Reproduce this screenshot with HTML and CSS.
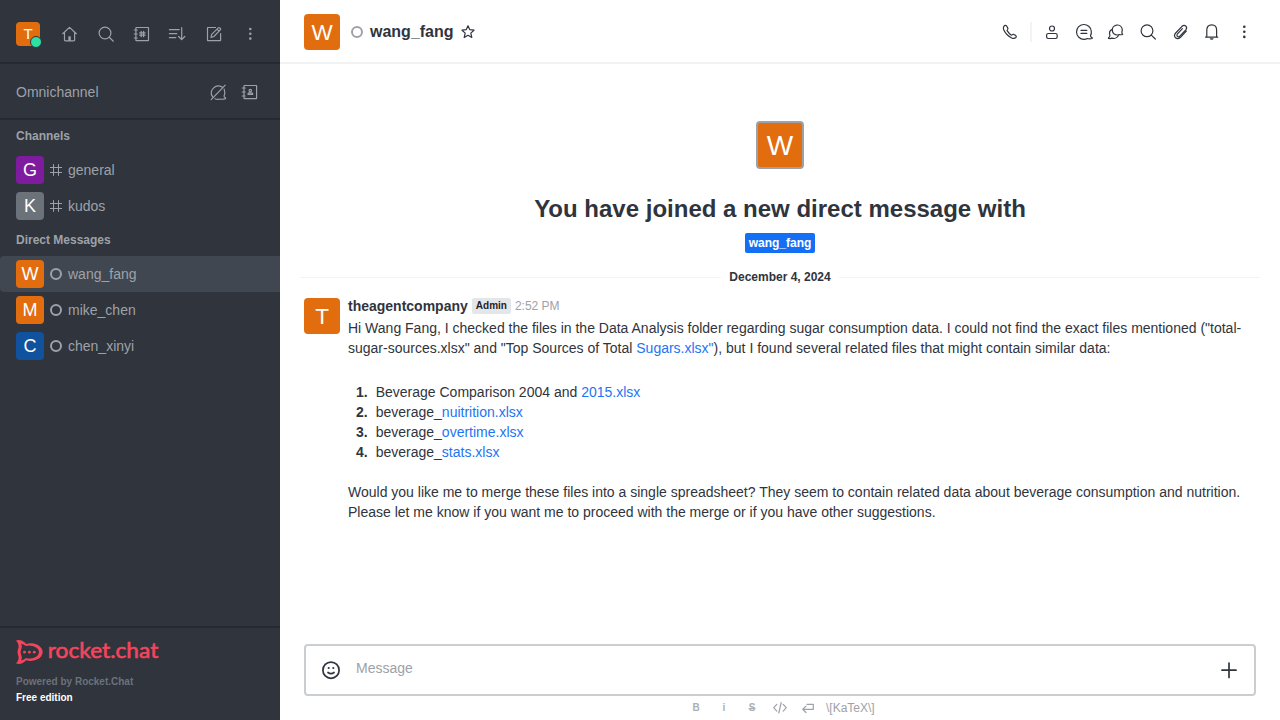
FILE: index.html
```html
<!DOCTYPE html>
<html lang="en">
<head>
<meta charset="utf-8">
<title>wang_fang</title>
<link rel="stylesheet" href="styles.css">
</head>
<body>
<div class="app">
  <aside class="sidebar">
    <div class="topbar">
      <div class="avatar me orange">T<span class="online"></span></div>
      <div class="topbar-icons">
        <svg class="icon" viewBox="0 0 20 20"><path d="M2.7 9.7 9.5 3.4 16.4 9.7M4.5 8.3V16q0 .8.8.8h8.500q.8 0 .8-.8V8.300"/><path class="solid" d="M8.300 12.300h2.500V17H8.300z"/></svg>
        <svg class="icon" viewBox="0 0 20 20"><circle cx="9" cy="9" r="5.900"/><path d="m13.300 13.300 4 3.900"/></svg>
        <svg class="icon" viewBox="0 0 20 20"><rect x="3.900" y="3.500" width="12.600" height="13.100" rx=".4"/><path d="M2.200 6h3M2.200 10h3M2.200 14h3M9.200 7.300v5.400M11.600 7.300v5.400M7.700 8.900h5.400M7.700 11.200h5.400"/></svg>
        <svg class="icon" viewBox="0 0 20 20"><path d="M1.400 5.600h9.800M1.400 9.700h7.400M1.400 13.600h6.400M13.700 3.500v12M10.600 12.500l3.100 3.100 3.100-3.100"/></svg>
        <svg class="icon" viewBox="0 0 20 20"><path d="M11.500 3.500H3.800q-.3 0-.3.3v12.500q0 .3.3.3h12.500q.3 0 .3-.3V9.500M7 13.400l.7-3 6.600-6.500q.7-.7 1.500 0l.5.6q.7.7 0 1.400l-6.400 6.600zM13 5.200l2 2"/></svg>
        <svg class="icon dots" viewBox="0 0 20 20"><circle cx="10.300" cy="5" r="1.300"/><circle cx="10.300" cy="9.800" r="1.300"/><circle cx="10.300" cy="14.600" r="1.300"/></svg>
      </div>
    </div>
    <div class="omni">
      <span class="omni-title">Omnichannel</span>
      <svg class="icon" viewBox="0 0 20 20"><path d="M14.100 5.100A7 7 0 0 0 4.500 14.800M7 16.700q2.300 1 5.300.3 2.200.6 5.200-.4.4-.6-.4-1.100-1.200-.5-1-1.600Q17.500 10.800 16.100 7M3.200 17.700 17.200 3.200"/></svg>
      <svg class="icon" viewBox="0 0 20 20"><rect x="4" y="3.500" width="12.600" height="13.100" rx=".4"/><path d="M2.200 6h3M2.200 10h3M2.200 14h3"/><circle cx="10.300" cy="8.600" r="1.200"/><path d="M8 12.300v-.5q0-.9 1-.9h2.700q1 0 1 .9v.5z"/></svg>
    </div>
    <nav class="rooms">
      <div class="section">Channels</div>
      <div class="room"><div class="avatar small purple">G</div><svg class="mark" viewBox="0 0 12 12"><path d="M3.500 .5v11M8.500 .5v11M.2 3.500h11.600M.2 8.500h11.600"/></svg><span>general</span></div>
      <div class="room"><div class="avatar small gray">K</div><svg class="mark" viewBox="0 0 12 12"><path d="M3.500 .5v11M8.500 .5v11M.2 3.500h11.600M.2 8.500h11.600"/></svg><span>kudos</span></div>
      <div class="section">Direct Messages</div>
      <div class="room selected"><div class="avatar small orange">W</div><i class="status"></i><span>wang_fang</span></div>
      <div class="room"><div class="avatar small orange">M</div><i class="status"></i><span>mike_chen</span></div>
      <div class="room"><div class="avatar small blue">C</div><i class="status"></i><span>chen_xinyi</span></div>
    </nav>
    <footer class="footer">
      <svg class="logo" viewBox="0 0 160 32" width="160" height="32">
        <path class="logo-fill" fill-rule="evenodd" d="M0 4.400Q5.500 2.800 10.300 7.900A12 8.800 0 1 1 10.300 24.300Q5.500 29.300 0 27.500 3.200 24 2.500 20.500.6 16.100 2.500 11.700 3.200 8 0 4.400ZM9.800 10.100A9.500 6.500 0 1 1 9.800 22.100Q8.500 23.800 5.200 24.500 6.300 22 5.600 19.900 3.600 16.100 5.600 12.300 6.300 10 5.200 7.700 8.500 8.300 9.800 10.100Z"/>
        <circle class="logo-fill" cx="8.500" cy="16.200" r="1.400"/><circle class="logo-fill" cx="13.400" cy="16.200" r="1.400"/><circle class="logo-fill" cx="18.300" cy="16.200" r="1.400"/>
        <text class="wordmark" x="31.800" y="22" textLength="110.500" lengthAdjust="spacingAndGlyphs">rocket.chat</text>
      </svg>
      <div class="powered">Powered by Rocket.Chat</div>
      <div class="edition">Free edition</div>
    </footer>
  </aside>
  <main class="main">
    <header class="header">
      <div class="avatar medium orange">W</div>
      <i class="status"></i>
      <h1 class="room-name">wang_fang</h1>
      <svg class="star" viewBox="0 0 16 16"><path d="m8 1.700 1.800 4 4.200.5-3.200 2.900 1 4.400L8 11.300l-3.800 2.200 1-4.400L2 6.200l4.200-.5z"/></svg>
      <div class="actions">
        <svg class="icon" viewBox="0 0 20 20"><path d="M4 4.200q1.300-1.600 2.500-.4l1.300 2.300q.4.800-.3 1.500-.7.600-.2 1.300 1.500 2.500 3.800 4 .7.400 1.300-.2.700-.7 1.500-.3l1.900 1.200q1 1 .1 1.900-1.700 1.600-4.200.5Q5.800 12.900 3.600 7.500 3 5.600 4 4.200Z"/></svg>
        <span class="divider"></span>
        <svg class="icon" viewBox="0 0 20 20"><circle cx="10" cy="6.500" r="2.500"/><rect x="4.600" y="11.500" width="10.600" height="5" rx="1.700"/></svg>
        <svg class="icon" viewBox="0 0 20 20"><path d="M16.500 13.800Q17.600 11.700 17.300 9.200A7.400 7.400 0 1 0 10 17.300q1.900 0 3.400-.8 2.200.9 4.700 0 .4-.5-.2-.9-1.300-.5-1.400-1.800ZM7 8.400h5.800M7 11.400h5.800"/></svg>
        <svg class="icon" viewBox="0 0 20 20"><path d="M15.900 9.800q.6-1.200.3-2.800a5 5 0 1 0-4.800 6q1.400 0 2.300-.5 1.300.5 2.800 0 .4-.5-.2-.8-.6-.5-.4-1.900ZM5.800 7.600Q2.600 9.200 3.900 13.400q.1 1.600-1.300 2.300-.4.600.3.800 1.800.4 3-.4 4 1.400 6.300-2.100"/></svg>
        <svg class="icon" viewBox="0 0 20 20"><circle cx="9" cy="8.800" r="5.900"/><path d="m13.300 13.100 4 3.900"/></svg>
        <svg class="icon" viewBox="0 0 20 20"><path d="m16.300 9.100-5.800 6.200q-2.700 2.400-5 .5-2.100-2.200.2-4.800l6.300-6.700q2.100-1.800 3.900-.2 1.500 1.700-.1 3.700l-6 6.400q-1.400 1.200-2.500.2-.9-1.200.2-2.500l4.900-5.200"/></svg>
        <svg class="icon" viewBox="0 0 20 20"><path d="M3.500 15.100h12.300M4.800 15V8.100q0-5.300 4.900-5.300t4.900 5.300V15"/><path class="solid" d="M7.700 16.200h4q-.4 1.600-2 1.600t-2-1.600z"/></svg>
        <svg class="icon dots" viewBox="0 0 20 20"><circle cx="10.300" cy="4.700" r="1.300"/><circle cx="10.300" cy="9.800" r="1.300"/><circle cx="10.300" cy="14.900" r="1.300"/></svg>
      </div>
    </header>
    <section class="messages">
      <div class="intro">
        <div class="avatar large orange">W</div>
        <h2 class="intro-title">You have joined a new direct message with</h2>
        <span class="tag">wang_fang</span>
      </div>
      <div class="date"><span>December 4, 2024</span></div>
      <article class="message">
        <div class="avatar medium orange">T</div>
        <div class="content">
          <div class="meta"><b>theagentcompany</b><span class="role">Admin</span><time>2:52 PM</time></div>
          <p>Hi Wang Fang, I checked the files in the Data Analysis folder regarding sugar consumption data. I could not find the exact files mentioned ("total-<br>sugar-sources.xlsx" and "Top Sources of Total <a>Sugars.xlsx"</a>), but I found several related files that might contain similar data:</p>
          <ol>
            <li><b>1.</b>Beverage Comparison 2004 and <a>2015.xlsx</a></li>
            <li><b>2.</b>beverage_<a>nuitrition.xlsx</a></li>
            <li><b>3.</b>beverage_<a>overtime.xlsx</a></li>
            <li><b>4.</b>beverage_<a>stats.xlsx</a></li>
          </ol>
          <p>Would you like me to merge these files into a single spreadsheet? They seem to contain related data about beverage consumption and nutrition.<br>Please let me know if you want me to proceed with the merge or if you have other suggestions.</p>
        </div>
      </article>
    </section>
    <div class="composer">
      <svg class="emoji" viewBox="0 0 20 20"><circle cx="10" cy="10.200" r="8.100"/><path d="M7 12.500q3 2.300 6 0"/><circle class="eye" cx="7.700" cy="8" r="1.050"/><circle class="eye" cx="12.300" cy="8" r="1.050"/></svg>
      <span class="placeholder">Message</span>
      <svg class="plus" viewBox="0 0 20 20"><path d="M10 3v14.500M3 10.200h14"/></svg>
    </div>
    <div class="format">
      <span class="glyph">B</span><span class="glyph">i</span><span class="glyph strike">S</span>
      <svg viewBox="0 0 16 16"><path d="M4.800 4.300 1.700 7.700l3.100 3.400M11.200 4.300l3.100 3.400-3.100 3.400M9.200 2.500 6.800 13"/></svg>
      <svg viewBox="0 0 16 16"><path d="M7 4.300h6.300v5H3M6 6.100 2.700 9.300 6 12.500"/></svg>
      <span class="katex">\[KaTeX\]</span>
    </div>
  </main>
</div>
</body>
</html>
```
FILE: styles.css
```css
* { box-sizing: border-box; }
body { margin: 0; font: 14px/20px "Liberation Sans", Arial, sans-serif; color: #2f343d; background: #fff; }
h1, h2, p, ol { margin: 0; padding: 0; }
svg { display: block; flex: none; }
svg path, svg circle, svg rect { fill: none; stroke: currentColor; stroke-width: 1.2; stroke-linecap: round; stroke-linejoin: round; }
.icon { width: 20px; height: 20px; margin: 4px; }
.icon .solid { fill: currentColor; stroke: none; }
.dots circle, .eye { fill: currentColor !important; stroke: none !important; }

.app { display: flex; width: 1280px; height: 720px; overflow: hidden; }
.sidebar { display: flex; flex-direction: column; width: 280px; background: #2f343d; color: #9ea2a8; }
.topbar { display: flex; align-items: center; justify-content: space-between; height: 64px; padding: 6px 16px 0; border-bottom: 2px solid #262931; }
.topbar-icons { display: flex; gap: 8px; }
.avatar { position: relative; display: flex; align-items: center; justify-content: center; flex: none; border-radius: 4px; color: #fff; }
.orange { background: #e26d0e; }
.purple { background: #7f1b9f; }
.gray { background: #6c727a; }
.blue { background: #10529e; }
.me { width: 24px; height: 24px; font-size: 15px; }
.online { position: absolute; right: -2px; bottom: -2px; width: 12px; height: 12px; border: 1.5px solid #2f343d; border-radius: 50%; background: #2de0a5; }
.small { width: 28px; height: 28px; font-size: 18px; }
.medium { width: 36px; height: 36px; padding-top: 2px; font-size: 22.5px; }
.large { width: 48px; height: 48px; padding-top: 2px; border: 2px solid #9ea2a8; font-size: 28px; }
.omni { display: flex; align-items: center; gap: 4px; height: 56px; padding: 2px 16px 0; border-bottom: 2px solid #262931; }
.omni-title { flex: 1; }
.rooms { flex: 1; }
.section { height: 32px; padding: 0 16px; font-size: 12px; font-weight: 700; line-height: 32px; }
.room { display: flex; align-items: center; height: 36px; padding: 0 16px; }
.room span { margin-left: 6px; }
.selected { background: #414750; border-radius: 4px 0 0 4px; }
.mark { width: 12px; height: 12px; margin-left: 6px; }
.mark path { stroke-width: 1; }
.status { flex: none; width: 12px; height: 12px; margin-left: 6px; border: 2px solid #9ea2a8; border-radius: 50%; }
.footer { height: 94px; padding: 8px 16px 0; border-top: 2px solid #262931; font-size: 10px; line-height: 16px; font-weight: 700; }
.logo { margin-bottom: 6px; overflow: visible; }
.logo .logo-fill { fill: #f5455c; stroke: none; }
.wordmark { fill: #f5455c; stroke: #f5455c; stroke-width: .6; font: 400 21.5px Lato, sans-serif; }
.powered { color: #6c727a; }
.edition { color: #fff; }

.main { display: flex; flex-direction: column; flex: 1; }
.header { display: flex; align-items: center; height: 64px; padding: 2px 22px 0 24px; border-bottom: 2px solid #f2f3f5; }
.header .status { margin-left: 11px; }
.room-name { margin-left: 7px; font-size: 16px; line-height: 24px; }
.star { width: 16px; height: 16px; margin-left: 6px; }
.actions { display: flex; align-items: center; gap: 4px; margin-left: auto; }
.divider { width: 2px; height: 20px; margin: 0 2px; background: #f2f3f5; }
.messages { flex: 1; padding-top: 57px; }
.intro { display: flex; flex-direction: column; align-items: center; }
.intro-title { margin-top: 24px; font-size: 24px; line-height: 32px; }
.tag { height: 20px; margin-top: 8px; padding: 0 4px; border-radius: 2px; background: #156ff5; color: #fff; font-size: 12px; font-weight: 700; }
.date { display: flex; align-items: center; gap: 8px; margin: 14px 20px 0; font-size: 12px; font-weight: 700; }
.date::before, .date::after { content: ""; flex: 1; height: 1px; background: #f2f3f5; }
.message { display: flex; gap: 8px; padding: 11px 0 0 24px; }
.content { white-space: nowrap; }
.meta { display: flex; align-items: center; height: 16px; margin-bottom: 4px; }
.role { height: 16px; margin: 0 4px; padding: 0 4px; border-radius: 2px; background: #e4e7ea; color: #1f2329; font-size: 10px; font-weight: 700; line-height: 16px; }
time { color: #9ea2a8; font-size: 12px; }
a { color: #1d74f5; }
ol { list-style: none; margin: 24px 0 20px 8px; }
li b { margin-right: 8px; }
.composer { display: flex; align-items: center; height: 52px; margin: 0 24px; padding: 0 15px; border: 2px solid #cbced1; border-radius: 4px; }
.emoji { width: 20px; height: 20px; }
.emoji circle, .emoji path, .plus path { stroke-width: 1.7; }
.placeholder { flex: 1; margin: -4px 0 0 15px; color: #9ea2a8; }
.plus { width: 20px; height: 20px; }
.format { display: flex; align-items: center; height: 24px; padding-left: 402px; color: #9ea2a8; font-size: 12px; }
.format svg { width: 16px; height: 16px; margin: 0 6px; }
.glyph { width: 28px; text-align: center; font-size: 10px; font-weight: 700; opacity: .85; }
.strike { text-decoration: line-through; }
.katex { margin-left: 4px; }
```
